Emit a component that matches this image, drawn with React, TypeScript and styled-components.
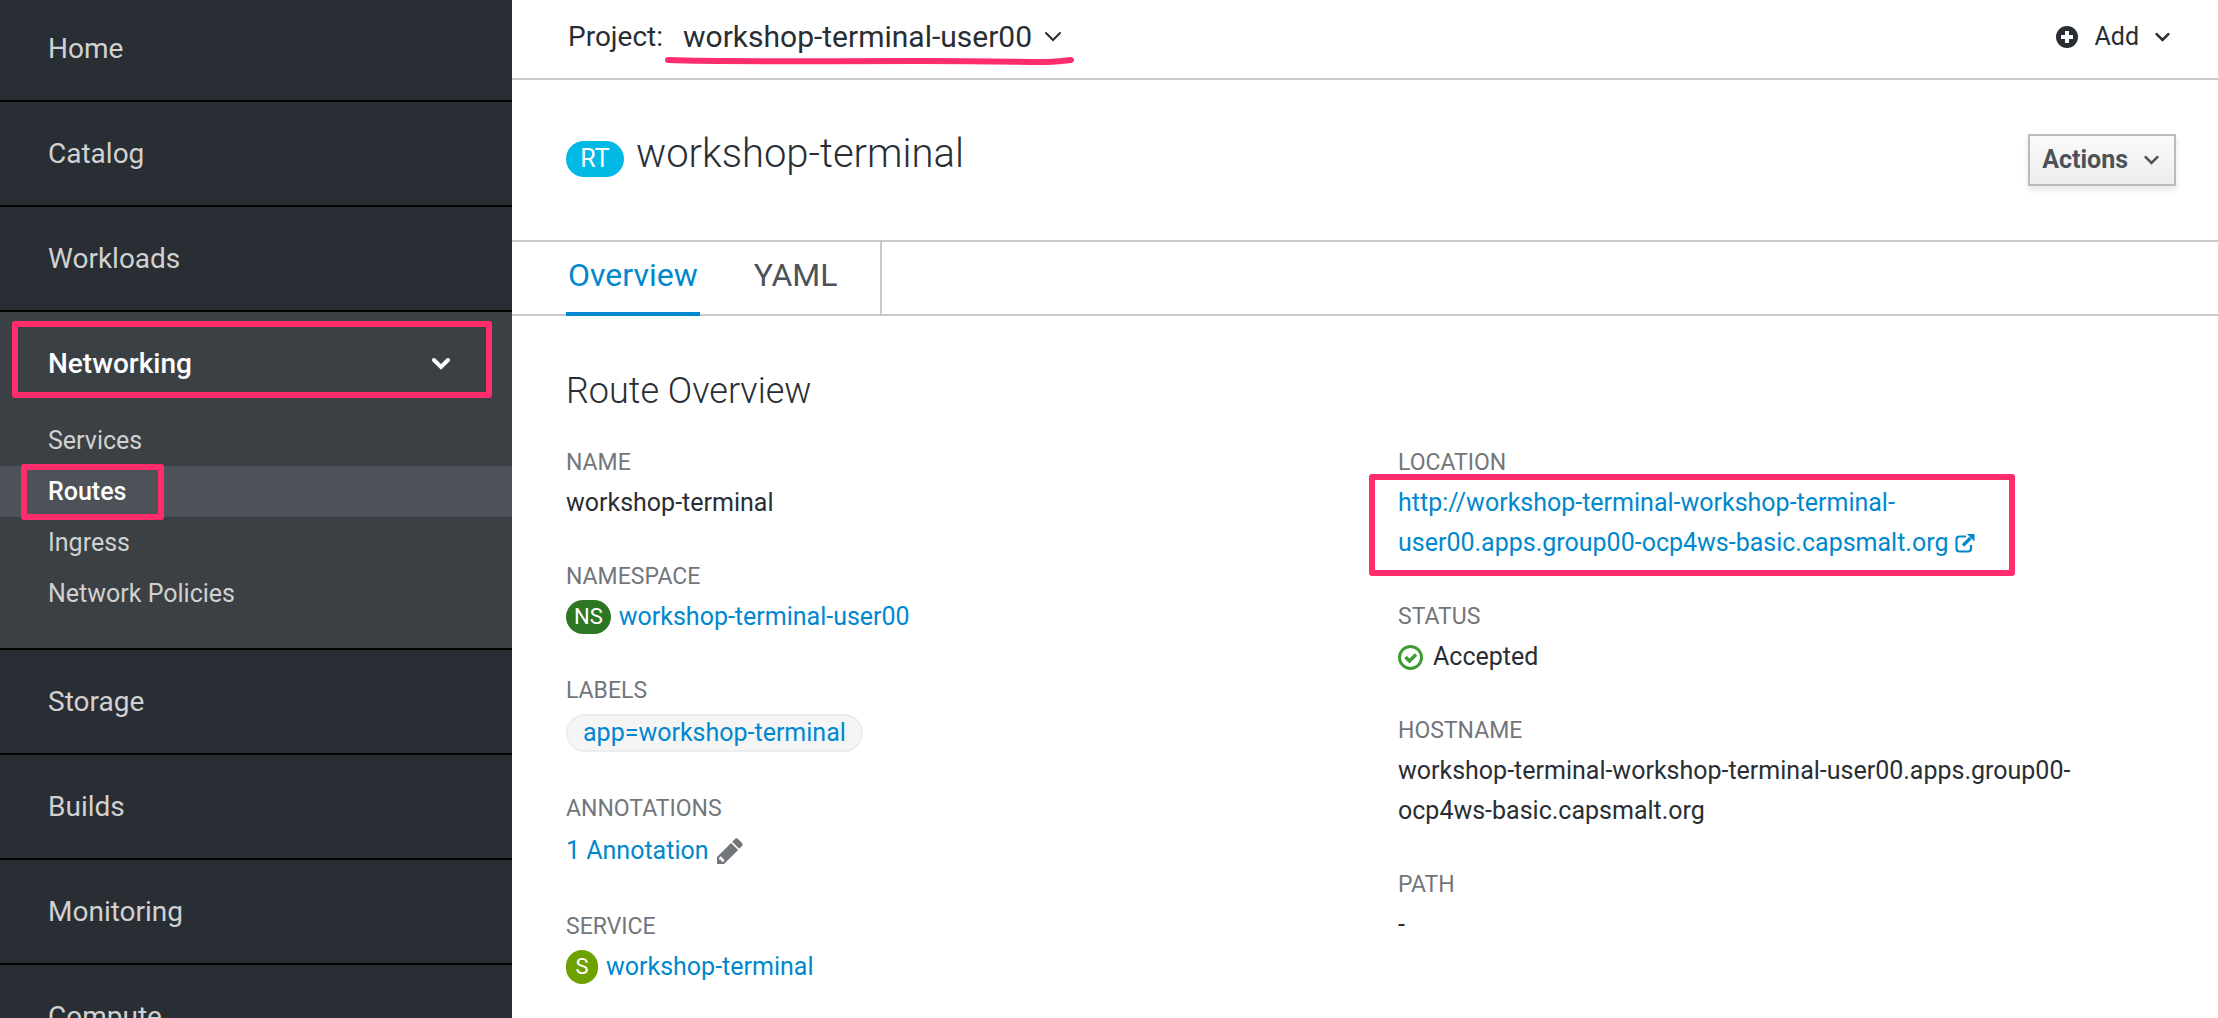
import React from "react";
import styled, { createGlobalStyle, css } from "styled-components";

const GlobalStyle = createGlobalStyle`
  *, *::before, *::after { box-sizing: border-box; }
  body {
    margin: 0;
    background: #fff;
    color: #292e34;
    font-family: Roboto, "Liberation Sans", sans-serif;
    font-size: 25px;
    line-height: 40px;
  }
  html, body { height: 100%; overflow: hidden; }
  #root { height: 100%; }
  button { font: inherit; color: inherit; background: none; border: 0; padding: 0; margin: 0; cursor: pointer; text-align: left; }
  a { color: #0088ce; text-decoration: none; }
  h1, h2, dl, dt, dd, ul { margin: 0; padding: 0; }
  ul { list-style: none; }
`;

const marker = "#ff2d6c";

const Page = styled.div`
  display: grid;
  grid-template-columns: 512px minmax(0, 1fr);
  height: 100%;
`;

const Sidebar = styled.nav`
  background: #292e34;
  color: #d1d1d1;
  overflow: hidden;
`;

const NavList = styled.ul`
  margin-top: -3px;
`;

const NavSection = styled.li<{ $open?: boolean }>`
  border-bottom: 2px solid #030303;
  ${(p) =>
    p.$open &&
    css`
      background: #3b4044;
      padding-bottom: 29px;
    `}
`;

const NavToggle = styled.button<{ $open?: boolean }>`
  position: relative;
  display: flex;
  align-items: center;
  justify-content: space-between;
  width: 100%;
  height: 103px;
  padding: 0 62px 0 48px;
  font-size: 28px;
  color: ${(p) => (p.$open ? "#fff" : "inherit")};
  font-weight: ${(p) => (p.$open ? 500 : 400)};
`;

const SubLink = styled.a<{ $active?: boolean }>`
  position: relative;
  display: flex;
  align-items: center;
  height: 51px;
  padding-left: 48px;
  color: ${(p) => (p.$active ? "#fff" : "#d1d1d1")};
  font-weight: ${(p) => (p.$active ? 500 : 400)};
  background: ${(p) => (p.$active ? "#4d5258" : "transparent")};
`;

const Highlight = styled.span<{ $inset: string }>`
  position: absolute;
  inset: ${(p) => p.$inset};
  border: 6px solid ${marker};
  border-radius: 3px;
  pointer-events: none;
`;

const RoutesHighlight = styled(Highlight)`
  width: 143px;
`;

const Main = styled.main`
  min-width: 0;
  overflow: hidden;
`;

const ProjectBar = styled.div`
  display: flex;
  align-items: center;
  justify-content: space-between;
  height: 80px;
  padding: 0 48px 4px 56px;
  border-bottom: 2px solid #c9c9c9;
`;

const ProjectPicker = styled.div`
  display: flex;
  align-items: center;
  gap: 20px;
  font-size: 28px;
`;

const ProjectButton = styled.button`
  position: relative;
  display: flex;
  align-items: center;
  gap: 12px;
  font-size: 30px;
`;

const Underline = styled.svg`
  position: absolute;
  left: -18px;
  bottom: -12px;
  width: calc(100% + 30px);
  height: 12px;
  overflow: visible;
`;

const AddButton = styled.button`
  display: flex;
  align-items: center;
  gap: 16px;
`;

const TitleBar = styled.header`
  display: flex;
  align-items: center;
  justify-content: space-between;
  height: 162px;
  padding: 0 42px 0 54px;
  border-bottom: 2px solid #c9c9c9;
`;

const Title = styled.h1`
  display: flex;
  align-items: baseline;
  gap: 12px;
  padding-bottom: 10px;
  font-size: 40px;
  font-weight: 300;
`;

const Badge = styled.span<{ $color: string; $large?: boolean }>`
  display: inline-flex;
  align-items: center;
  justify-content: center;
  min-width: ${(p) => (p.$large ? 58 : 32)}px;
  height: ${(p) => (p.$large ? 36 : 34)}px;
  padding: 0 8px;
  border-radius: 18px;
  background: ${(p) => p.$color};
  color: #fff;
  font-size: ${(p) => (p.$large ? 25 : 22)}px;
  font-weight: 400;
`;

const ActionsButton = styled.button`
  display: flex;
  align-items: center;
  gap: 16px;
  height: 52px;
  padding: 0 15px 0 12px;
  border: 2px solid #bbb;
  background: linear-gradient(#fafafa, #ededed);
  box-shadow: 0 4px 6px rgba(3, 3, 3, 0.1);
  color: #4d5258;
  font-weight: 700;
`;

const Tabs = styled.div`
  display: flex;
  height: 74px;
  padding-left: 54px;
  border-bottom: 2px solid #c9c9c9;
`;

const TabGroup = styled.div`
  display: flex;
  gap: 52px;
  padding-right: 40px;
  border-right: 2px solid #c9c9c9;
`;

const Tab = styled.button<{ $active?: boolean }>`
  height: 74px;
  padding: 0 2px 4px;
  font-size: 32px;
  color: ${(p) => (p.$active ? "#0088ce" : "#4d5258")};
  border-bottom: 4px solid ${(p) => (p.$active ? "#0088ce" : "transparent")};
`;

const Content = styled.section`
  padding: 55px 42px 0 54px;
`;

const SectionTitle = styled.h2`
  font-size: 36px;
  font-weight: 300;
`;

const Columns = styled.div`
  display: grid;
  grid-template-columns: 1fr 1fr;
  column-gap: 54px;
  padding-top: 32px;
`;

const Details = styled.dl`
  display: flex;
  flex-direction: column;
  gap: 34px;
`;

const Term = styled.dt`
  color: #72767b;
  font-size: 23px;
  text-transform: uppercase;
`;

const Value = styled.dd<{ $tall?: boolean }>`
  display: flex;
  align-items: center;
  gap: 8px;
  min-height: ${(p) => (p.$tall ? 44 : 40)}px;
`;

const Chip = styled.a`
  height: 38px;
  padding: 0 15px;
  border: 2px solid #ededed;
  border-radius: 19px;
  background: #f5f5f5;
  line-height: 34px;
`;

const RouteLink = styled.a`
  position: relative;

  svg {
    vertical-align: -2px;
  }
`;

const Chevron = ({ size = 15, weight = 3 }: { size?: number; weight?: number }) => (
  <svg width={size} height={size} viewBox="0 0 18 18" fill="none" stroke="currentColor" strokeWidth={weight} strokeLinecap="round" aria-hidden="true">
    <path d="M2 5l7 7 7-7" />
  </svg>
);

const PlusCircle = () => (
  <svg width="22" height="22" viewBox="0 0 22 22" aria-hidden="true">
    <circle cx="11" cy="11" r="11" fill="#292e34" />
    <path d="M11 5v12M5 11h12" stroke="#fff" strokeWidth="4" />
  </svg>
);

const Pencil = () => (
  <svg width="26" height="26" viewBox="0 0 1536 1536" fill="#72767b" aria-hidden="true">
    <path d="M363 1408l91-91-235-235-91 91v107h128v128h107zM832 288l416 416-832 832H0v-416zM1515 384q0 53-37 90l-166 166-416-416 166-165q36-38 90-38 53 0 91 38l235 234q37 39 37 91z" />
  </svg>
);

const ExternalLink = () => (
  <svg width="20" height="20" viewBox="0 0 20 20" fill="none" stroke="currentColor" aria-hidden="true">
    <path d="M11 3.500H4.500a3 3 0 0 0-3 3v9a3 3 0 0 0 3 3h8.500a3 3 0 0 0 3-3V12" strokeWidth="2.200" />
    <path d="M8 12.500l7.500-7.500" strokeWidth="3.200" />
    <path d="M12 1h7.500v7.500z" fill="currentColor" stroke="none" />
  </svg>
);

const StatusOk = () => (
  <svg width="27" height="25" viewBox="0 0 27 25" fill="none" stroke="#3f9c35" aria-hidden="true">
    <circle cx="12.5" cy="12.5" r="11" strokeWidth="3" />
    <path d="M7.500 12l4 4 6.500-6.500" strokeWidth="3.500" />
  </svg>
);

const Item = ({ term, tall, children }: { term: string; tall?: boolean; children: React.ReactNode }) => (
  <div>
    <Term>{term}</Term>
    <Value $tall={tall}>{children}</Value>
  </div>
);

const NavItem = ({ label }: { label: string }) => (
  <NavSection>
    <NavToggle type="button">{label}</NavToggle>
  </NavSection>
);

export default function App() {
  return (
    <Page>
      <GlobalStyle />
      <Sidebar>
        <NavList>
          <NavItem label="Home" />
          <NavItem label="Catalog" />
          <NavItem label="Workloads" />
          <NavSection $open>
            <NavToggle type="button" $open aria-expanded="true">
              Networking
              <Chevron size={18} weight={4} />
              <Highlight $inset="9px 20px 17px 12px" />
            </NavToggle>
            <ul>
              <li><SubLink href="#services">Services</SubLink></li>
              <li>
                <SubLink href="#routes" $active aria-current="page">
                  Routes
                  <RoutesHighlight $inset="-2px auto -3px 21px" />
                </SubLink>
              </li>
              <li><SubLink href="#ingress">Ingress</SubLink></li>
              <li><SubLink href="#policies">Network Policies</SubLink></li>
            </ul>
          </NavSection>
          <NavItem label="Storage" />
          <NavItem label="Builds" />
          <NavItem label="Monitoring" />
          <NavItem label="Compute" />
        </NavList>
      </Sidebar>
      <Main>
        <ProjectBar>
          <ProjectPicker>
            <span>Project:</span>
            <ProjectButton type="button" aria-haspopup="listbox">
              workshop-terminal-user00
              <Chevron size={18} weight={2} />
              <Underline viewBox="0 0 402 12" preserveAspectRatio="none" fill="none" aria-hidden="true">
                <path d="M3 3C60 5 130 4 250 4S370 7 399 3" stroke={marker} strokeWidth="6" strokeLinecap="round" />
              </Underline>
            </ProjectButton>
          </ProjectPicker>
          <AddButton type="button">
            <PlusCircle />
            Add
            <Chevron />
          </AddButton>
        </ProjectBar>
        <TitleBar>
          <Title>
            <Badge $color="#00b9e4" $large>RT</Badge>
            workshop-terminal
          </Title>
          <ActionsButton type="button">
            Actions
            <Chevron />
          </ActionsButton>
        </TitleBar>
        <Tabs>
          <TabGroup role="tablist">
            <Tab type="button" role="tab" aria-selected="true" $active>Overview</Tab>
            <Tab type="button" role="tab" aria-selected="false">YAML</Tab>
          </TabGroup>
        </Tabs>
        <Content>
          <SectionTitle>Route Overview</SectionTitle>
          <Columns>
            <Details>
              <Item term="Name">workshop-terminal</Item>
              <Item term="Namespace">
                <Badge $color="#2d7623">NS</Badge>
                <a href="#namespace">workshop-terminal-user00</a>
              </Item>
              <Item term="Labels" tall>
                <Chip href="#label">app=workshop-terminal</Chip>
              </Item>
              <Item term="Annotations" tall>
                <a href="#annotations">1 Annotation</a>
                <Pencil />
              </Item>
              <Item term="Service">
                <Badge $color="#6ca100">S</Badge>
                <a href="#service">workshop-terminal</a>
              </Item>
            </Details>
            <Details>
              <Item term="Location">
                <RouteLink href="#location">
                  http://workshop-terminal-workshop-terminal-
                  <br />
                  user00.apps.group00-ocp4ws-basic.capsmalt.org <ExternalLink />
                  <Highlight $inset="-9px -40px -13px -29px" />
                </RouteLink>
              </Item>
              <Item term="Status">
                <StatusOk />
                Accepted
              </Item>
              <Item term="Hostname">
                <span>
                  workshop-terminal-workshop-terminal-user00.apps.group00-
                  <br />
                  ocp4ws-basic.capsmalt.org
                </span>
              </Item>
              <Item term="Path">-</Item>
            </Details>
          </Columns>
        </Content>
      </Main>
    </Page>
  );
}
